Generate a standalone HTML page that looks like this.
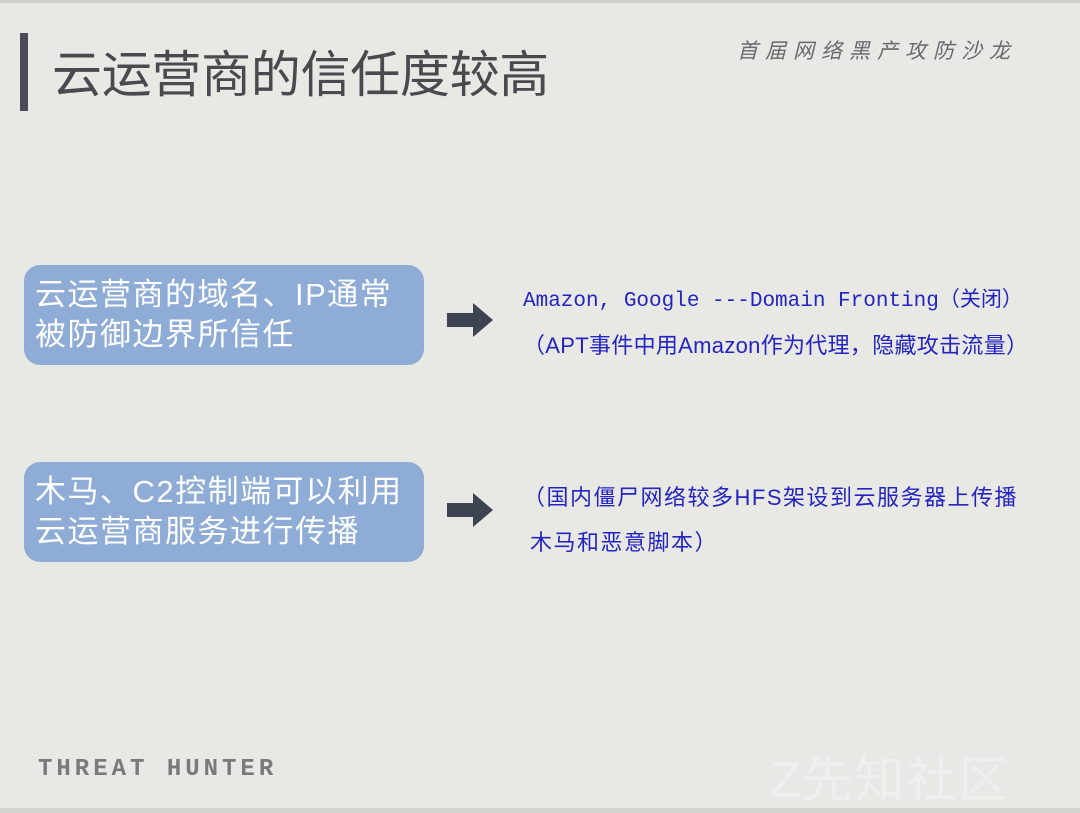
<!DOCTYPE html>
<html><head><meta charset="utf-8"><style>
body{margin:0;width:1080px;height:813px;background:#e8e8e5;position:relative;overflow:hidden;font-family:"Liberation Sans","Noto Sans CJK SC",sans-serif}
.a{position:absolute}
.box{position:absolute;left:24px;width:400px;height:100px;background:#8facd6;border-radius:16px;color:#fff;font-size:31px;line-height:40px;box-sizing:border-box;padding:10px 0 0 11px;letter-spacing:1.5px;white-space:nowrap}
.arr{position:absolute;left:447px;width:46px;height:34px}
.blue{position:absolute;color:#2424c0;font-size:22px;white-space:nowrap}
</style></head><body>
<div class="a" style="left:0;top:0;width:1080px;height:3px;background:#d0d0cd"></div>
<div class="a" style="left:0;top:808px;width:1080px;height:5px;background:#d4d4d1"></div>
<div class="a" style="left:20px;top:33px;width:8px;height:78px;background:#4a4a58"></div>
<div class="a" style="left:52px;top:40px;font-size:50px;color:#4a4a4e;line-height:70px;letter-spacing:-0.3px">云运营商的信任度较高</div>
<div class="a" style="left:737px;top:35px;font-size:21px;color:#6a6a6a;font-style:italic;letter-spacing:7px">首届网络黑产攻防沙龙</div>
<div class="box" style="top:265px">云运营商的域名、IP通常<br>被防御边界所信任</div>
<div class="box" style="top:462px">木马、C2控制端可以利用<br>云运营商服务进行传播</div>
<svg class="arr" style="top:303px" viewBox="0 0 46 34"><path d="M0 10H26V0L46 17L26 34V24H0Z" fill="#3d4350"/></svg>
<svg class="arr" style="top:493px" viewBox="0 0 46 34"><path d="M0 10H26V0L46 17L26 34V24H0Z" fill="#3d4350"/></svg>
<div class="blue" style="left:523px;top:283px;font-family:'Liberation Mono','Noto Sans CJK SC',monospace;font-size:21px">Amazon, Google ---Domain Fronting（关闭）</div>
<div class="blue" style="left:523px;top:328px;letter-spacing:0.3px">（APT事件中用Amazon作为代理，隐藏攻击流量）</div>
<div class="blue" style="left:523px;top:480px;letter-spacing:1.5px">（国内僵尸网络较多HFS架设到云服务器上传播</div>
<div class="blue" style="left:530px;top:525px;letter-spacing:1.5px">木马和恶意脚本）</div>
<div class="a" style="left:38px;top:756px;font-size:24px;font-weight:bold;color:#7a7a78;letter-spacing:4px;font-family:'Liberation Mono',monospace">THREAT HUNTER</div>
<div class="a" style="left:770px;top:740px;font-size:50px;color:#efefed;letter-spacing:2px">Z先知社区</div>
</body></html>
